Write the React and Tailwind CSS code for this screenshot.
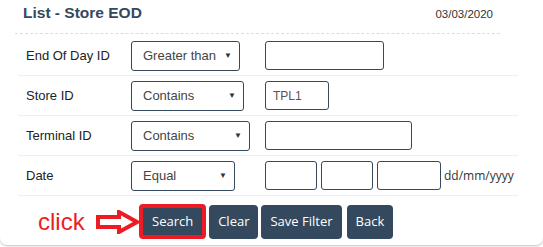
import React from 'react';

const FilterRow = ({ label, op, selectW, children }) => (
  <div className="flex items-center h-[40px] border-b border-[#eeeeee]">
    <div className="w-[113px] pl-[8px] text-[13px] text-[#222]">{label}</div>
    <div className="w-[134px] flex">
      <div
        className={`${selectW} h-[30px] flex items-center justify-between pl-[11px] pr-[7px] border border-[#34495e] rounded-[3px] text-[13px] text-[#444]`}
      >
        <span>{op}</span>
        <span className="text-[8px] text-[#333]">▼</span>
      </div>
    </div>
    <div className="flex items-center gap-[4px]">{children}</div>
  </div>
);

const Box = ({ w, value }) => (
  <div className={`${w} h-[29px] flex items-center px-[7px] border border-[#34495e] rounded-[3px] text-[12px] text-[#555]`}>
    {value}
  </div>
);

const Btn = ({ children, className = '' }) => (
  <button
    className={`h-[34px] px-[9px] bg-[#34495e] text-white rounded-[4px] text-[13px] ${className}`}
    style={{ fontFamily: '"Open Sans", sans-serif' }}
  >
    {children}
  </button>
);

export default function App() {
  return (
    <div
      className="w-[543px] h-[247px] bg-white overflow-hidden"
      style={{ fontFamily: '"Liberation Sans", Arial, sans-serif' }}
    >
      <div className="h-[245px] bg-white rounded-b-[7px] shadow-[0_1px_2px_rgba(0,0,0,0.25)]">
        <div className="mx-[15px] w-[485px] h-[34px] flex items-start justify-between pt-[4px] pl-[8px] pr-[7px] border-b border-dashed border-[#dddddd]">
          <h2 className="text-[15.5px] leading-[18px] font-bold text-[#34495e]">List - Store EOD</h2>
          <span className="text-[11.5px] leading-[18px] mt-[1px] text-[#333]">03/03/2020</span>
        </div>
        <div className="ml-[18px] w-[500px] mt-[2px]">
          <FilterRow label="End Of Day ID" op="Greater than" selectW="w-[109px]">
            <Box w="w-[119px]" />
          </FilterRow>
          <FilterRow label="Store ID" op="Contains" selectW="w-[113px]">
            <Box w="w-[64px]" value="TPL1" />
          </FilterRow>
          <FilterRow label="Terminal ID" op="Contains" selectW="w-[119px]">
            <Box w="w-[147px]" />
          </FilterRow>
          <FilterRow label="Date" op="Equal" selectW="w-[104px]">
            <Box w="w-[52px]" />
            <Box w="w-[52px]" />
            <Box w="w-[64px]" />
            <span className="text-[12px] text-[#333] -ml-[1px]" style={{ fontFamily: '"Open Sans", sans-serif' }}>
              dd/mm/yyyy
            </span>
          </FilterRow>
        </div>
        <div className="flex items-center mt-[8px]">
          <span className="ml-[38px] w-[58px] text-[24px] leading-none text-[#ed1c24]">click</span>
          <svg width="43" height="24" viewBox="0 0 43 24">
            <polygon
              points="2,7 23,7 23,2 41,12 23,22 23,17 2,17"
              fill="white"
              stroke="#ed1c24"
              strokeWidth="4"
              strokeLinejoin="miter"
            />
          </svg>
          <div className="flex items-center gap-[3px]">
            <Btn className="border-[4px] border-[#ed1c24] px-[6px] h-[35px]">Search</Btn>
            <Btn>Clear</Btn>
            <Btn>Save Filter</Btn>
            <Btn className="ml-[2px]">Back</Btn>
          </div>
        </div>
      </div>
    </div>
  );
}
